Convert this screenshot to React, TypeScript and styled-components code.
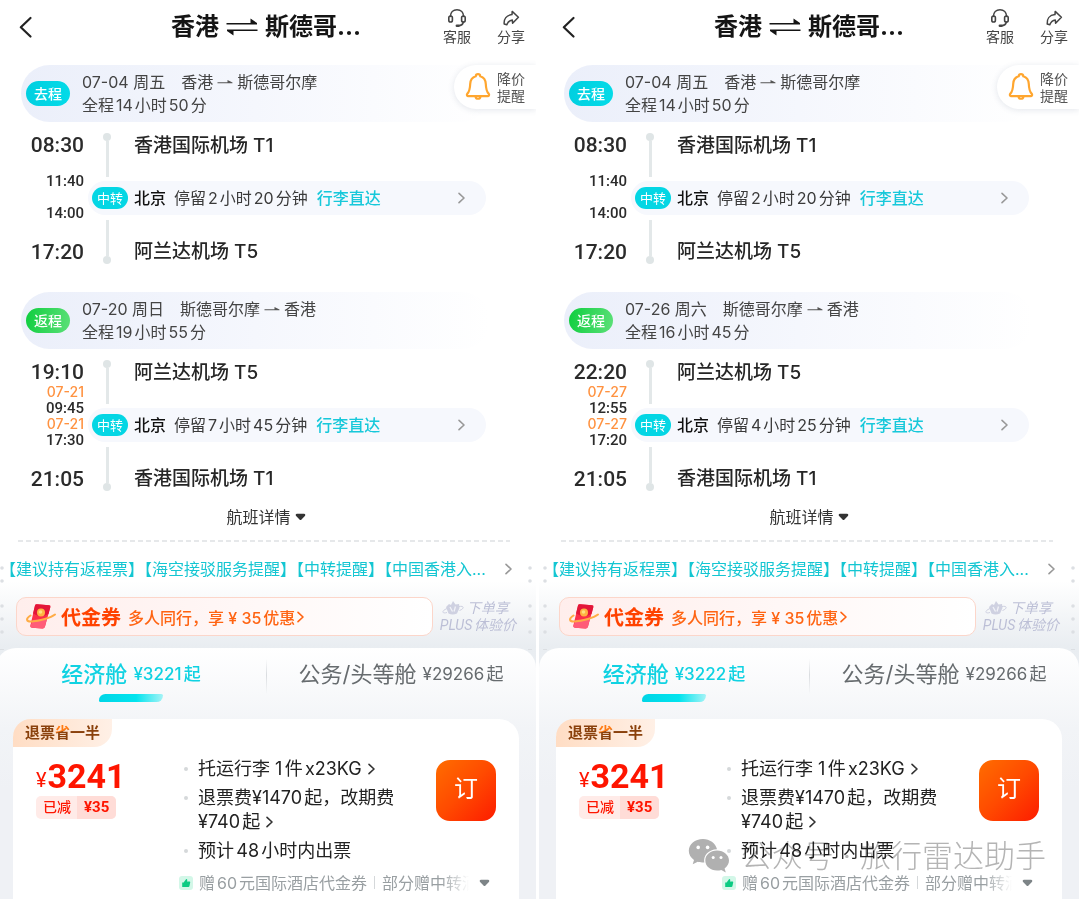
import React from "react";
import styled, { createGlobalStyle, css } from "styled-components";

const GlobalStyle = createGlobalStyle`
  *, *::before, *::after { box-sizing: border-box; }
  body {
    margin: 0;
    background: #fff;
    color: #333;
    font-family: Inter, "Noto Sans CJK SC", sans-serif;
    font-size: 16px;
    text-autospace: normal;
    overflow-x: hidden;
  }
  button {
    border: 0;
    padding: 0;
    background: none;
    color: inherit;
    font: inherit;
    cursor: pointer;
  }
  a { color: inherit; text-decoration: none; }
  h1, h2, p, ul { margin: 0; padding: 0; font-weight: inherit; }
  ul { list-style: none; }
  svg { display: block; flex: none; }
`;

const Page = styled.main`
  position: relative;
  display: grid;
  grid-template-columns: 1fr 1fr;
  gap: 3px;
  min-height: 100vh;
  margin-left: -4px;
  padding-right: 1px;
`;

const Panel = styled.section`
  position: relative;
  display: flex;
  flex-direction: column;
  min-width: 0;
  overflow: hidden;
`;

/* ---------- header ---------- */

const Header = styled.header`
  display: grid;
  grid-template-columns: 1fr auto 1fr;
  align-items: center;
  height: 65px;
  padding: 0 11px 12px;
`;

const BackButton = styled.button`
  justify-self: start;
  margin-left: 11px;
`;

const Title = styled.h1`
  display: flex;
  align-items: center;
  gap: 7px;
  color: #151515;
  font-size: 24px;
  line-height: 32px;
  font-weight: 700;
  white-space: nowrap;
`;

const Actions = styled.div`
  display: flex;
  justify-self: end;
  gap: 26px;
`;

const Action = styled.button`
  display: flex;
  flex-direction: column;
  align-items: center;
  color: #444;
  font-size: 14px;
  line-height: 18px;
`;

/* ---------- itinerary ---------- */

const LegHeader = styled.div`
  position: relative;
  display: flex;
  align-items: center;
  gap: 12px;
  height: 57px;
  margin: 0 46px 11px 25px;
  padding-left: 5px;
  border-radius: 29px;
  background: linear-gradient(90deg, #ebeffa, #f5f7fd 50%, #fff);
  color: #444;
  line-height: 23px;
`;

const LegBadge = styled.span<{ $back?: boolean }>`
  padding: 0 8px;
  border-radius: 13px;
  background: ${(p) =>
    p.$back
      ? "linear-gradient(100deg, #0fce3f, #5ce078)"
      : "linear-gradient(100deg, #00cfe0, #04dbe8)"};
  color: #fff;
  font-size: 14px;
  line-height: 25px;
  font-weight: 500;
`;

const Route = styled.span`
  display: inline-flex;
  align-items: center;
  gap: 4px;
  margin-left: 16px;
`;

const PriceAlert = styled.button`
  position: absolute;
  top: 65px;
  right: 0;
  display: flex;
  align-items: center;
  gap: 6px;
  height: 44px;
  padding: 0 11px;
  border-radius: 22px 0 0 22px;
  background: #fff;
  box-shadow: 0 1px 6px rgba(60, 80, 110, 0.14);
  color: #555;
  font-size: 14px;
  line-height: 17px;
  text-align: left;
`;

const Leg = styled.div`
  display: grid;
  grid-template-columns: 88px 1fr;
  gap: 4px;
  margin-bottom: 28px;
  padding-right: 50px;
`;

const Times = styled.div`
  display: flex;
  flex-direction: column;
  align-items: flex-end;
  color: #2b2b2b;
  font-family: Roboto, "Noto Sans CJK SC", sans-serif;
  font-size: 15px;
  line-height: 16px;
  font-weight: 500;
`;

const MainTime = styled.time`
  font-size: 21px;
  line-height: 24px;

  &:last-child { margin-top: auto; }
`;

const MidTime = styled.div`
  display: flex;
  flex-direction: column;
  align-items: flex-end;
  justify-content: flex-end;
  height: 32px;
`;

const NextDay = styled.span`
  color: #ff9240;
  font-family: Inter, sans-serif;
  font-size: 14px;
`;

const Stop = styled.div<{ $last?: boolean }>`
  display: flex;
  align-items: ${(p) => (p.$last ? "flex-end" : "flex-start")};
  height: ${(p) => (p.$last ? 49 : 48)}px;
  color: #262626;
  font-size: 19px;
  line-height: 25px;
  font-weight: 500;
`;

const Track = styled.span<{ $last?: boolean }>`
  display: flex;
  flex-direction: ${(p) => (p.$last ? "column-reverse" : "column")};
  align-items: center;
  width: 38px;
  height: 44px;
  margin-right: 8px;

  &::before {
    content: "";
    width: 8px;
    height: 8px;
    border-radius: 50%;
    background: #dfe5e6;
  }
  &::after {
    content: "";
    flex: 1;
    width: 3px;
    background: #e3e8e9;
  }
`;

const Transfer = styled.button`
  display: flex;
  align-items: center;
  width: 100%;
  height: 34px;
  padding: 0 20px 0 4px;
  border-radius: 17px;
  background: #f6f8fd;
  color: #3a3a3a;
  line-height: 24px;
  white-space: nowrap;
`;

const TransferBadge = styled.span`
  width: 36px;
  margin-right: 6px;
  border-radius: 11px;
  background: #04d6e4;
  color: #fff;
  font-size: 13px;
  line-height: 22px;
  text-align: center;
`;

const City = styled.strong`
  margin-right: 8px;
  color: #111;
  font-weight: 500;
`;

const Direct = styled.span`
  margin: 0 auto 0 9px;
  color: #17c8da;
  font-weight: 500;
`;

const Details = styled.button`
  display: flex;
  align-items: center;
  align-self: center;
  gap: 4px;
  margin: -14px 0 11px;
  color: #333;
  line-height: 24px;
`;

const Dashes = styled.div`
  height: 2px;
  margin: 0 26px 15px 22px;
  background: repeating-linear-gradient(90deg, #e6e8ea 0 5px, transparent 5px 8px);
`;

/* ---------- offers ---------- */

const Offers = styled.div`
  position: relative;
  flex: 1;
  display: flex;
  flex-direction: column;
  background: linear-gradient(180deg, #fff 24px, #e9edf1 90px, #eff1f5 180px);
`;

const Perforation = styled.svg<{ $right?: boolean }>`
  position: absolute;
  top: 0;
  ${(p) => (p.$right ? "right: 3px;" : "left: 3px;")}
`;

const Notice = styled.a`
  display: flex;
  align-items: center;
  justify-content: space-between;
  margin-bottom: 16px;
  padding: 0 23px 0 4px;
  color: #14c6d2;
  line-height: 24px;
  white-space: nowrap;
`;

const Promo = styled.div`
  display: flex;
  align-items: center;
  gap: 7px;
  margin-bottom: 12px;
  padding: 0 20px;
`;

const Voucher = styled.button`
  flex: 1;
  display: flex;
  align-items: center;
  gap: 5px;
  height: 39px;
  padding: 0 9px;
  border: 1px solid #fcd6ca;
  border-radius: 10px;
  background: linear-gradient(90deg, #ffeeec, #fff);
  color: #ff6412;
  font-weight: 500;
  white-space: nowrap;

  strong {
    margin-right: 2px;
    color: #ff4200;
    font-size: 20px;
    font-weight: 700;
  }
  svg:last-child { margin-left: -4px; }
`;

const Plus = styled.p`
  color: #bcbfd6;
  font-family: Roboto, "Noto Sans CJK SC", sans-serif;
  font-size: 14px;
  line-height: 17px;
  font-style: italic;
  font-weight: 400;
  white-space: nowrap;

  span {
    display: flex;
    align-items: center;
    gap: 3px;
    padding-left: 2px;
  }
`;

const Sheet = styled.div`
  flex: 1;
  display: flex;
  flex-direction: column;
  border-radius: 20px 20px 0 0;
  background: linear-gradient(180deg, #fff, #f2f4f7 80px, #eff1f5 140px);
  position: relative;
`;

const Tabs = styled.div`
  display: grid;
  grid-template-columns: 1fr 1fr;
  margin-bottom: 17px;
`;

const Tab = styled.button<{ $active?: boolean }>`
  display: flex;
  flex-direction: column;
  align-items: center;
  gap: 4px;
  height: 54px;
  padding-top: 10px;
  color: #666b6e;
  font-size: 17px;
  line-height: 32px;
  white-space: nowrap;

  span {
    display: flex;
    align-items: center;
    gap: 6px;
  }
  b {
    font-size: 22px;
    font-weight: 400;
  }

  & + & {
    background: linear-gradient(180deg, transparent 20%, #d9dcdf 50%, transparent 86%) 0 0 / 1px 100% no-repeat;
  }

  ${(p) =>
    p.$active &&
    css`
      color: #10d2e2;
      font-weight: 500;

      b { font-weight: 500; }

      &::after {
        content: "";
        width: 64px;
        height: 8px;
        border-radius: 8px 2px 8px 2px;
        background: linear-gradient(90deg, #00d5e6, #02e4ee 58%, #a5f3f6);
      }
    `}
`;

const Card = styled.article`
  flex: 1;
  margin: 0 17px;
  border-radius: 20px 20px 0 0;
  background: #fff;
`;

const Ribbon = styled.span`
  display: inline-block;
  margin-bottom: 10px;
  padding: 0 12px;
  border-radius: 18px 0 18px 0;
  background: linear-gradient(90deg, #ffddc4, #fff0e6);
  color: #8a410c;
  font-size: 15px;
  line-height: 28px;
  font-weight: 700;

  em {
    background: linear-gradient(165deg, #ff7a12 42%, #8a410c 46%);
    background-clip: text;
    color: transparent;
    font-style: normal;
  }
`;

const CardBody = styled.div`
  display: grid;
  grid-template-columns: 148px 1fr 60px;
  padding: 0 23px 3px;
`;

const Fare = styled.div`
  display: flex;
  flex-direction: column;
  align-items: flex-start;
  gap: 2px;
  color: #fe1500;
  font-family: Roboto, "Noto Sans CJK SC", sans-serif;
`;

const Amount = styled.p`
  display: flex;
  align-items: flex-end;
  gap: 1px;
  height: 37px;
  font-size: 34px;
  line-height: 36px;
  font-weight: 700;

  small {
    font-size: 20px;
    line-height: 28px;
    font-weight: 400;
  }
`;

const Saving = styled.p`
  display: flex;
  border-radius: 5px;
  overflow: hidden;
  background: #ffebe8;
  font-size: 14px;
  line-height: 23px;
  font-weight: 500;

  span { padding: 0 6px 0 7px; }
  b {
    padding: 0 7px;
    background: #ffdcd7;
    font-size: 15px;
  }
`;

const Terms = styled.ul`
  display: flex;
  flex-direction: column;
  gap: 5px;
  padding-right: 16px;
  color: #222;
  font-size: 18px;
  line-height: 24px;

  li {
    position: relative;
    padding-left: 14px;
  }
  li::before {
    content: "";
    position: absolute;
    top: 10px;
    left: 0;
    width: 4px;
    height: 4px;
    border-radius: 50%;
    background: #d5d8da;
  }
`;

const Term = styled.button`
  display: inline;
  text-align: left;

  svg, span { display: inline; }
  span { white-space: nowrap; }
`;

const BookButton = styled.button`
  height: 61px;
  margin-top: 3px;
  border-radius: 14px;
  background: linear-gradient(135deg, #ff6d00, #ff4a00 50%, #fd1c00);
  color: #fff;
  font-size: 24px;
  line-height: 56px;
  padding-bottom: 4px;
`;

const Gift = styled.button`
  grid-column: 2 / 4;
  display: flex;
  align-items: center;
  gap: 6px;
  margin: 9px 6px 0 -5px;
  color: #999fa2;
  line-height: 22px;
`;

const GiftText = styled.span`
  flex: 1;
  overflow: hidden;
  text-align: left;
  white-space: nowrap;
  mask-image: linear-gradient(90deg, #000 calc(100% - 32px), transparent calc(100% - 4px));

  i {
    display: inline-block;
    width: 1px;
    height: 13px;
    margin: 0 7px;
    background: #d5d8da;
  }
`;

const Watermark = styled.div`
  position: absolute;
  right: 34px;
  bottom: 23px;
  display: flex;
  align-items: center;
  gap: 11px;
  color: #b4b4b4;
  font-size: 31px;
  line-height: 40px;
  font-weight: 300;
  white-space: pre;
  mix-blend-mode: multiply;
  pointer-events: none;
`;

/* ---------- icons ---------- */

const BackIcon = () => (
  <svg width="15" height="24" viewBox="0 0 15 24" fill="none" stroke="#222" strokeWidth="2.2" strokeLinecap="round" strokeLinejoin="round" aria-hidden="true">
    <path d="M12.500 3L2.800 12.200L12.500 21.500" />
  </svg>
);

const SwapIcon = () => (
  <svg width="32" height="20" viewBox="0 0 32 20" fill="#151515" aria-hidden="true">
    <path d="M0.500 5.900H24.500V1.600L31 6V7.600H0.500Z" />
    <path d="M31.500 14.100H7.500V18.400L1 14V12.400H31.500Z" />
  </svg>
);

const HeadsetIcon = () => (
  <svg width="20" height="20" viewBox="0 0 20 20" fill="none" stroke="#444" strokeWidth="1.600" strokeLinecap="round" aria-hidden="true">
    <path d="M3.400 8.500C3.400 4.300 6.300 1.700 10 1.700S16.600 4.300 16.600 8.500" />
    <rect x="1.800" y="8" width="3.600" height="6" rx="1.800" />
    <rect x="14.600" y="8" width="3.600" height="6" rx="1.800" />
    <path d="M16.300 14.200C15.800 16.300 14 17.500 11.500 17.700" />
    <path d="M9.800 17.800H11.600" strokeWidth="2.400" />
  </svg>
);

const ShareIcon = () => (
  <svg width="20" height="20" viewBox="0 0 20 20" fill="none" stroke="#444" strokeWidth="1.500" strokeLinejoin="round" aria-hidden="true">
    <path d="M11.200 3.400L17.400 9.200L11.600 15.200L11.300 12C8.400 12.300 7 13.600 5.800 16.800L3.200 16C2.700 11 5.400 7.200 11 6.600Z" />
  </svg>
);

const BellIcon = () => (
  <svg width="26" height="30" viewBox="0 0 26 30" fill="none" stroke="#ffa62f" strokeWidth="2.200" strokeLinecap="round" strokeLinejoin="round" aria-hidden="true">
    <path d="M10.700 4.300C10.900 1.400 15.100 1.400 15.300 4.300C18.900 5.300 20.600 8.300 20.800 12C21 16.600 21.600 19.600 23.600 21.600C24.600 22.700 24 24.200 22.600 24.200H3.400C2 24.200 1.400 22.700 2.400 21.600C4.400 19.600 5 16.600 5.200 12C5.400 8.300 7.100 5.300 10.700 4.300Z" />
    <path d="M10.600 24.800C11 27.400 15 27.400 15.400 24.800" />
  </svg>
);

const RouteArrow = () => (
  <svg width="16" height="8" viewBox="0 0 16 8" fill="#555" aria-hidden="true">
    <path d="M0.500 4.200H10.500V2L15.500 4.500V5.300H0.500Z" />
  </svg>
);

const Chevron = ({ color = "#999", size = 12 }: { color?: string; size?: number }) => (
  <svg width={size * 0.75} height={size} viewBox="0 0 9 12" fill="none" stroke={color} strokeWidth="1.600" strokeLinecap="round" strokeLinejoin="round" aria-hidden="true">
    <path d="M2 1.300L7 6L2 10.700" />
  </svg>
);

const Caret = ({ color = "#333" }: { color?: string }) => (
  <svg width="11" height="8" viewBox="0 0 11 8" fill={color} aria-hidden="true">
    <path d="M2 0.800H9C10.300 0.800 10.700 2 9.900 2.900L6.500 6.500C5.900 7.200 5.100 7.200 4.500 6.500L1.100 2.900C0.300 2 0.700 0.800 2 0.800Z" />
  </svg>
);

const CouponIcon = () => (
  <svg width="30" height="28" viewBox="0 0 30 28" fill="none" aria-hidden="true">
    <path d="M9 2.500Q9.400 1 11 1.200L23 2.300Q24.900 2.500 24.300 4.300L19 23.600Q18.400 25.700 16.300 25.500L6 24.700Q3.800 24.500 4.400 22.500Z" fill="#fb2f49" />
    <path d="M9 2.500Q9.400 1 11 1.200L23 2.300Q24.900 2.500 24.300 4.300L22.500 11Q15 15.500 7 10.500Z" fill="#e31638" />
    <path d="M7 17L21 15.500L19 23.600Q18.400 25.700 16.300 25.500L6 24.700Q3.800 24.500 4.400 22.500Z" fill="#ff5c78" />
    <circle cx="15" cy="9.500" r="4" fill="#ffb341" />
    <circle cx="14.500" cy="9" r="1.800" fill="#ffdf80" />
    <path d="M4.500 12.500C-0.500 15.500 0 18.800 5.500 18.600C14 18.200 25 14.500 29 11.500" stroke="#ffac45" strokeWidth="2" strokeLinecap="round" />
  </svg>
);

const PlusIcon = () => (
  <svg width="22" height="16" viewBox="0 0 22 16" fill="none" aria-hidden="true">
    <path d="M4 7L7 4L9 5L11 1L13.500 4.500L17 4L17.500 8L15 13.500Q10.500 15.500 6.500 13.500Z" fill="#cfd1e1" />
    <path d="M8 7L10.500 11.500M13.500 6.500L12 11.500" stroke="#f1f2f7" strokeWidth="1.300" />
    <path d="M5 8.500C-1 11 0 14 5 12.500M17 6.500C23 5.500 22 9 17.500 10.500" stroke="#cfd1e1" strokeWidth="1" />
  </svg>
);

const ThumbIcon = () => (
  <svg width="14" height="14" viewBox="0 0 14 14" aria-hidden="true">
    <rect width="14" height="14" rx="3" fill="#d3f7e8" />
    <path d="M3.200 6.400H5V11H3.200ZM4.800 6.300L7.200 2.900C8.400 3 8.500 4 8 5.600H10.500Q11.400 5.700 11.200 6.600L10.400 10.300Q10.200 11 9.400 11H4.800Z" fill="#0ccb83" />
  </svg>
);

const ChatIcon = () => (
  <svg width="42" height="36" viewBox="0 0 42 36" fill="#b0b0b0" aria-hidden="true">
    <path d="M15 1C6.800 1 0.800 6.300 0.800 12.800C0.800 16.600 2.800 19.800 6 22L4.700 26.300L9.800 23.700C11.800 24.300 13.500 24.500 16.300 24.500C15 17.500 20.700 11.300 29 11.200C27.500 5.200 21.800 1 15 1Z" />
    <path d="M29 12.600C22.200 12.600 17.300 17 17.300 22.600C17.300 28.200 22.300 32.600 29 32.600C30.600 32.600 32 32.400 33.300 31.900L37.800 34.400L36.600 30.400C39.400 28.500 41 25.700 41 22.600C41 17 35.800 12.600 29 12.600Z" />
    <g fill="#fff">
      <circle cx="10.200" cy="9.400" r="1.800" />
      <circle cx="19.600" cy="9.400" r="1.800" />
      <circle cx="25.200" cy="19.600" r="1.500" />
      <circle cx="33" cy="19.600" r="1.500" />
    </g>
  </svg>
);

/* Ticket-edge marks: round holes and short dashes at their distance from the top of the strip. */
const holes = [11, 24, 49, 62, 75, 207, 220, 246, 272, 285, 312, 338];
const ticks = [-1, 92, 104, 131, 144, 157, 170, 183, 235, 301];

const EdgeMarks = ({ right }: { right?: boolean }) => (
  <Perforation $right={right} width="6" height="340" viewBox="0 0 6 340" fill="#dcdfe3" aria-hidden="true">
    {holes.map((y) => (
      <circle key={y} cx="3" cy={y} r="1.800" />
    ))}
    {ticks.map((y) => (
      <rect key={y} x="1" y={y} width="4" height="1" />
    ))}
  </Perforation>
);

/* ---------- data ---------- */

interface Layover {
  arrive: string;
  depart: string;
  nextDay?: string;
  stay: string;
}

interface LegData {
  back?: boolean;
  date: string;
  from: string;
  to: string;
  total: string;
  start: string;
  end: string;
  startAirport: string;
  endAirport: string;
  layover: Layover;
}

interface Trip {
  legs: LegData[];
  economy: string;
}

const HKG = "香港国际机场 T1";
const ARN = "阿兰达机场 T5";

const outbound: LegData = {
  date: "07-04 周五",
  from: "香港",
  to: "斯德哥尔摩",
  total: "全程14小时50分",
  start: "08:30",
  end: "17:20",
  startAirport: HKG,
  endAirport: ARN,
  layover: { arrive: "11:40", depart: "14:00", stay: "停留2小时20分钟" },
};

const inbound = { back: true, from: "斯德哥尔摩", to: "香港", startAirport: ARN, endAirport: HKG, end: "21:05" };

const trips: Trip[] = [
  {
    legs: [
      outbound,
      {
        ...inbound,
        date: "07-20 周日",
        total: "全程19小时55分",
        start: "19:10",
        layover: { arrive: "09:45", depart: "17:30", nextDay: "07-21", stay: "停留7小时45分钟" },
      },
    ],
    economy: "¥3221起",
  },
  {
    legs: [
      outbound,
      {
        ...inbound,
        date: "07-26 周六",
        total: "全程16小时45分",
        start: "22:20",
        layover: { arrive: "12:55", depart: "17:20", nextDay: "07-27", stay: "停留4小时25分钟" },
      },
    ],
    economy: "¥3222起",
  },
];

/* ---------- sections ---------- */

const LegView = ({ leg }: { leg: LegData }) => (
  <>
    <LegHeader>
      <LegBadge $back={leg.back}>{leg.back ? "返程" : "去程"}</LegBadge>
      <div>
        <p>
          {leg.date}
          <Route>
            {leg.from}
            <RouteArrow />
            {leg.to}
          </Route>
        </p>
        <p>{leg.total}</p>
      </div>
    </LegHeader>
    <Leg>
      <Times>
        <MainTime>{leg.start}</MainTime>
        {[leg.layover.arrive, leg.layover.depart].map((time) => (
          <MidTime key={time}>
            {leg.layover.nextDay && <NextDay>{leg.layover.nextDay}</NextDay>}
            <time>{time}</time>
          </MidTime>
        ))}
        <MainTime>{leg.end}</MainTime>
      </Times>
      <div>
        <Stop>
          <Track />
          {leg.startAirport}
        </Stop>
        <Transfer type="button">
          <TransferBadge>中转</TransferBadge>
          <City>北京</City>
          {leg.layover.stay}
          <Direct>行李直达</Direct>
          <Chevron size={12} />
        </Transfer>
        <Stop $last>
          <Track $last />
          {leg.endAirport}
        </Stop>
      </div>
    </Leg>
  </>
);

const FareCard = () => (
  <Card>
    <Ribbon>
      退票<em>省</em>一半
    </Ribbon>
    <CardBody>
      <Fare>
        <Amount>
          <small>¥</small>3241
        </Amount>
        <Saving>
          <span>已减</span>
          <b>¥35</b>
        </Saving>
      </Fare>
      <Terms>
        <li>
          <Term type="button">
            托运行李 1件x23KG <Chevron color="#333" size={12} />
          </Term>
        </li>
        <li>
          <Term type="button">
            退票费¥1470起，改期费<wbr />
            <span>
              ¥740起 <Chevron color="#333" size={12} />
            </span>
          </Term>
        </li>
        <li>预计48小时内出票</li>
      </Terms>
      <BookButton type="button">订</BookButton>
      <Gift type="button">
        <ThumbIcon />
        <GiftText>
          赠60元国际酒店代金券
          <i />
          部分赠中转酒店
        </GiftText>
        <Caret color="#7d8487" />
      </Gift>
    </CardBody>
  </Card>
);

const TripPanel = ({ trip }: { trip: Trip }) => (
  <Panel>
    <Header>
      <BackButton type="button" aria-label="返回">
        <BackIcon />
      </BackButton>
      <Title>
        香港
        <SwapIcon />
        斯德哥...
      </Title>
      <Actions>
        <Action type="button">
          <HeadsetIcon />
          客服
        </Action>
        <Action type="button">
          <ShareIcon />
          分享
        </Action>
      </Actions>
    </Header>
    {trip.legs.map((leg) => (
      <LegView key={leg.date} leg={leg} />
    ))}
    <PriceAlert type="button">
      <BellIcon />
      <span>
        降价
        <br />
        提醒
      </span>
    </PriceAlert>
    <Details type="button">
      航班详情
      <Caret />
    </Details>
    <Dashes />
    <Offers>
      <EdgeMarks />
      <EdgeMarks right />
      <Notice href="#notice">
        【建议持有返程票】【海空接驳服务提醒】【中转提醒】【中国香港入...
        <Chevron size={12} />
      </Notice>
      <Promo>
        <Voucher type="button">
          <CouponIcon />
          <strong>代金券</strong>
          <span>多人同行，享 ¥ 35优惠</span>
          <Chevron color="#ff6412" size={12} />
        </Voucher>
        <Plus>
          <span>
            <PlusIcon />
            下单享
          </span>
          PLUS体验价
        </Plus>
      </Promo>
      <Sheet>
        <Tabs>
          <Tab type="button" $active>
            <span>
              <b>经济舱</b>
              {trip.economy}
            </span>
          </Tab>
          <Tab type="button">
            <span>
              <b>公务/头等舱</b>
              ¥29266起
            </span>
          </Tab>
        </Tabs>
        <FareCard />
      </Sheet>
    </Offers>
  </Panel>
);

export default function App() {
  return (
    <>
      <GlobalStyle />
      <Page>
        {trips.map((trip) => (
          <TripPanel key={trip.economy} trip={trip} />
        ))}
        <Watermark>
          <ChatIcon />
          <span>公众号 · 旅行雷达助手</span>
        </Watermark>
      </Page>
    </>
  );
}
